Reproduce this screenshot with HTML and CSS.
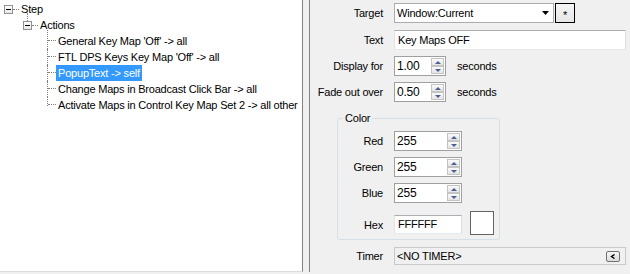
FILE: index.html
```html
<!DOCTYPE html>
<html lang="en">
<head>
  <meta charset="UTF-8" />
  <title>Popup Text Action</title>
  <link rel="stylesheet" href="styles.css">
</head>
<body>

  <div class="window">
    <div class="tree">
      <div class="node root">
        <span class="expander"></span>
        <span class="hdots"></span>
        <span class="text">Step</span>
      </div>
      <div class="node lvl1">
        <span class="stem"><span class="stub"></span><span class="expander"></span></span>
        <span class="hdots"></span>
        <span class="text">Actions</span>
      </div>
      <div class="node lvl2 first">
        <span class="branch"><span class="hline"></span></span>
        <span class="text">General Key Map 'Off' -&gt; all</span>
      </div>
      <div class="node lvl2">
        <span class="branch"><span class="hline"></span></span>
        <span class="text">FTL DPS Keys Key Map 'Off' -&gt; all</span>
      </div>
      <div class="node lvl2">
        <span class="branch"><span class="hline"></span></span>
        <span class="text selected">PopupText -&gt; self</span>
      </div>
      <div class="node lvl2">
        <span class="branch"><span class="hline"></span></span>
        <span class="text">Change Maps in Broadcast Click Bar -&gt; all</span>
      </div>
      <div class="node lvl2 last">
        <span class="branch"><span class="hline"></span></span>
        <span class="text">Activate Maps in Control Key Map Set 2 -&gt; all other</span>
      </div>
    </div>

    <div class="splitter"></div>

    <div class="props">
      <div class="row row-target">
        <span class="label">Target</span>
        <div class="combo">
          <span>Window:Current</span>
          <svg class="combo-arrow" width="7" height="4" viewBox="0 0 7 4"><polygon points="0,0 7,0 3.5,4" fill="#000"/></svg>
        </div>
        <div class="star-btn">*</div>
      </div>

      <div class="row row-text">
        <span class="label">Text</span>
        <div class="textbox wide">Key Maps OFF</div>
      </div>

      <div class="row row-spin">
        <span class="label">Display for</span>
        <div class="spin short">
          <span class="value">1.00</span>
          <span class="spin-btns"><span class="up"></span><span class="down"></span></span>
        </div>
        <span class="unit">seconds</span>
      </div>

      <div class="row row-spin">
        <span class="label">Fade out over</span>
        <div class="spin short">
          <span class="value">0.50</span>
          <span class="spin-btns"><span class="up"></span><span class="down"></span></span>
        </div>
        <span class="unit">seconds</span>
      </div>

      <fieldset class="color-group">
        <legend>Color</legend>
        <div class="row grow first-grow">
          <span class="label small">Red</span>
          <div class="spin">
            <span class="value">255</span>
            <span class="spin-btns"><span class="up"></span><span class="down"></span></span>
          </div>
        </div>
        <div class="row grow">
          <span class="label small">Green</span>
          <div class="spin">
            <span class="value">255</span>
            <span class="spin-btns"><span class="up"></span><span class="down"></span></span>
          </div>
        </div>
        <div class="row grow">
          <span class="label small">Blue</span>
          <div class="spin">
            <span class="value">255</span>
            <span class="spin-btns"><span class="up"></span><span class="down"></span></span>
          </div>
        </div>
        <div class="row hex-row">
          <span class="label small">Hex</span>
          <div class="textbox hex">FFFFFF</div>
          <div class="swatch"></div>
        </div>
      </fieldset>

      <div class="row row-timer">
        <span class="label">Timer</span>
        <div class="timer-box">
          <span>&lt;NO TIMER&gt;</span>
          <span class="timer-btn">
            <svg width="6" height="5" viewBox="0 0 6 5"><polyline points="4.5,0.5 1.5,2.5 4.5,4.5" fill="none" stroke="#000" stroke-width="1.4"/></svg>
          </span>
        </div>
      </div>
    </div>
  </div>

</body>
</html>
```

FILE: styles.css
```css
* { box-sizing: border-box; }

body {
  margin: 0;
  width: 630px;
  height: 274px;
  overflow: hidden;
  background: #f0f0f0;
  font-family: "Liberation Sans", Arial, sans-serif;
  font-size: 11px;
  letter-spacing: -0.2px;
  color: #000;
}

.window {
  display: flex;
  height: 272px;
}

/* tree view */
.tree {
  width: 303px;
  background: #fff;
  border-right: 1px solid #828282;
  border-bottom: 1px solid #dcdcdc;
  padding-top: 1px;
}

.node {
  display: flex;
  align-items: center;
  height: 16px;
}

.node .text {
  line-height: 16px;
  padding: 0 2px;
  white-space: nowrap;
}

.node .text.selected {
  background: #3399ff;
  color: #fff;
}

.expander {
  position: relative;
  width: 9px;
  height: 9px;
  border: 1px solid #919191;
  background: linear-gradient(#fff, #e8e8e8);
  flex: none;
}

.expander::after {
  content: "";
  position: absolute;
  left: 1px;
  top: 3px;
  width: 5px;
  height: 1px;
  background: #000;
}

.hdots {
  width: 6px;
  height: 1px;
  border-top: 1px dotted #808080;
}

.root {
  padding-left: 4px;
}

.lvl1 {
  padding-left: 23px;
  align-items: flex-start;
}

.lvl1 .stem {
  display: flex;
  flex-direction: column;
  align-items: center;
  margin-top: -4px;
}

.lvl1 .stub {
  width: 1px;
  height: 8px;
  border-left: 1px dotted #808080;
}

.lvl1 .hdots {
  margin-top: 8px;
}

.lvl2 {
  padding-left: 47px;
  align-items: stretch;
}

.branch {
  width: 9px;
  border-left: 1px dotted #808080;
  flex: none;
}

.hline {
  display: block;
  height: 8px;
  border-bottom: 1px dotted #808080;
}

.lvl2.first .branch { margin-top: -3px; }
.lvl2.first .hline { height: 11px; }
.lvl2.last .branch { align-self: flex-start; height: 9px; }

.splitter {
  width: 6px;
}

/* property panel */
.props {
  flex: 1;
  border-left: 1px solid #828282;
}

.row {
  display: flex;
  align-items: center;
  height: 20px;
  margin-top: 6px;
}

.row-target { margin-top: 3px; }
.row-text { margin-top: 7px; }

.label {
  width: 73px;
  margin-right: 11px;
  text-align: right;
  white-space: nowrap;
}

.label.small {
  width: 45px;
}

.combo {
  width: 160px;
  height: 20px;
  background: #fff;
  border: 1px solid #abadb3;
  display: flex;
  align-items: center;
  justify-content: space-between;
  padding: 0 4px 0 2px;
}

.star-btn {
  width: 20px;
  height: 20px;
  margin-left: 1px;
  border: 1px solid #000;
  background: linear-gradient(#f6f6f6, #e6e6e6);
  text-align: center;
  line-height: 22px;
  font-size: 11px;
}

.textbox {
  height: 20px;
  background: #fff;
  border: 1px solid;
  border-color: #abadb3 #dbdfe6 #e3e9ef #e2e3ea;
  padding-left: 3px;
  line-height: 18px;
}

.textbox.wide { width: 232px; }

.spin {
  width: 68px;
  height: 20px;
  background: #fff;
  border: 1px solid #a0a0a0;
  display: flex;
}

.spin.short { width: 52px; }

.spin .value {
  flex: 1;
  padding-left: 2px;
  line-height: 18px;
  font-size: 12px;
}

.spin-btns {
  width: 13px;
  margin: 1px 1px 1px 0;
  display: flex;
  flex-direction: column;
}

.spin-btns span {
  flex: 1;
  border: 1px solid #c4c4c4;
  background: linear-gradient(#fafafa, #e4e4e4);
  display: flex;
  align-items: center;
  justify-content: center;
}

.spin-btns .up::after,
.spin-btns .down::after {
  content: "";
  border-left: 3px solid transparent;
  border-right: 3px solid transparent;
}

.spin-btns .up::after { border-bottom: 3px solid #4c5f8c; }
.spin-btns .down::after { border-top: 3px solid #4c5f8c; }

.unit {
  margin-left: 11px;
}

.color-group {
  margin: 9px 0 0 27px;
  width: 163px;
  padding: 6px 0 4px 0;
  border: 1px solid #d5dfe5;
  border-radius: 3px;
}

.color-group legend {
  margin-left: 5px;
  padding: 0 2px;
  line-height: 14px;
}

.first-grow { margin-top: 0; }

.hex-row {
  height: 24px;
  margin-top: 8px;
}

.hex-row .label {
  margin-top: 3px;
}

.textbox.hex {
  width: 68px;
  height: 19px;
  line-height: 17px;
  margin-top: 3px;
  padding-left: 3px;
}

.swatch {
  width: 24px;
  height: 24px;
  margin-left: 8px;
  background: #fff;
  border: 1px solid #646464;
}

.row-timer {
  height: 18px;
  margin-top: 7px;
}

.timer-box {
  width: 232px;
  height: 18px;
  border: 1px solid #cacaca;
  background: #f0f0f0;
  display: flex;
  align-items: center;
  justify-content: space-between;
  padding: 0 5px 0 2px;
}

.timer-btn {
  width: 14px;
  height: 11px;
  border: 1px solid #707070;
  border-radius: 2px;
  background: linear-gradient(#f6f6f6, #dcdcdc);
  display: flex;
  align-items: center;
  justify-content: center;
}
```
